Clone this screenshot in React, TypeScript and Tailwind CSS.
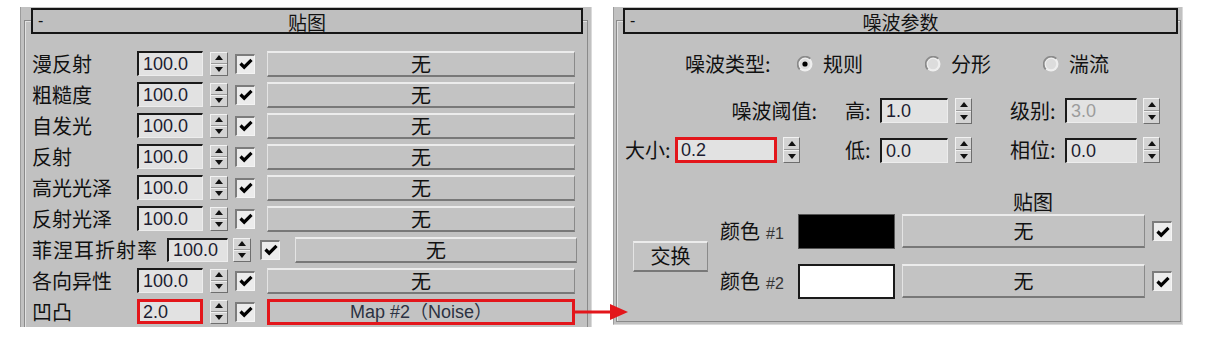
import React from "react";

const CJK = "font-['Noto_Sans_CJK_SC','Noto_Sans',sans-serif]";
const LAT = "font-['Liberation_Sans','Noto_Sans_CJK_SC',sans-serif]";

function Spinner({ className = "w-[18px] h-[24px]" }: { className?: string }) {
  return (
    <div
      className={`${className} flex flex-col bg-[#d3d3d3] border-t border-l border-b border-r border-t-[#f2f2f2] border-l-[#f2f2f2] border-b-[#6e6e6e] border-r-[#6e6e6e]`}
    >
      <div className="flex-1 flex items-center justify-center border-b border-b-[#9a9a9a]">
        <svg width="8" height="5" viewBox="0 0 8 5">
          <path d="M4 0 L8 5 L0 5Z" fill="#111" />
        </svg>
      </div>
      <div className="flex-1 flex items-center justify-center border-t border-t-[#f0f0f0]">
        <svg width="8" height="5" viewBox="0 0 8 5">
          <path d="M0 0 L8 0 L4 5Z" fill="#111" />
        </svg>
      </div>
    </div>
  );
}

function Check() {
  return (
    <div className="w-[20px] h-[20px] shrink-0 bg-[#ececec] border-t-2 border-l-2 border-b border-r border-t-[#7c7c7c] border-l-[#7c7c7c] border-b-[#f4f4f4] border-r-[#f4f4f4] flex items-center justify-center">
      <svg width="14" height="12" viewBox="0 0 14 12">
        <path d="M1.5 5.5 L5.2 9.2 L12.5 1.8" stroke="#000" strokeWidth="3.2" fill="none" />
      </svg>
    </div>
  );
}

function Field({
  value,
  className,
  red = false,
  dim = false,
}: {
  value: string;
  className: string;
  red?: boolean;
  dim?: boolean;
}) {
  const border = red
    ? "border-[3px] border-[#e3161b] pl-[3px]"
    : "border-t-2 border-l-2 border-b border-r border-t-[#1a1a1a] border-l-[#1a1a1a] border-b-[#ededed] border-r-[#ededed] pl-[4px]";
  return (
    <div
      className={`${className} ${border} shrink-0 bg-[#e2e2e2] flex items-center overflow-hidden ${LAT} text-[18px] leading-none ${
        dim ? "text-[#9c9c9c]" : "text-[#1c1c30]"
      }`}
    >
      {value}
    </div>
  );
}

function Btn({
  children,
  className,
  red = false,
}: {
  children: React.ReactNode;
  className: string;
  red?: boolean;
}) {
  const border = red
    ? "border-[3px] border-[#e3161b]"
    : "border-t-2 border-l border-b-2 border-r border-t-[#ececec] border-l-[#e4e4e4] border-b-[#787878] border-r-[#8a8a8a]";
  return (
    <div
      className={`${className} ${border} shrink-0 bg-[#c3c3c3] flex items-center justify-center text-[20px] leading-none text-[#111]`}
    >
      {children}
    </div>
  );
}

function TitleBar({ title, className }: { title: string; className: string }) {
  return (
    <div
      className={`${className} h-[26px] border-2 border-[#161616] bg-[#bfbfbf] flex items-center text-[#111]`}
    >
      <span className={`w-[24px] pl-[5px] ${LAT} text-[16px] leading-none`}>-</span>
      <span className="flex-1 text-center text-[19px] leading-none">{title}</span>
      <span className="w-[24px]" />
    </div>
  );
}

function Radio({ on = false }: { on?: boolean }) {
  return (
    <svg width="16" height="16" viewBox="0 0 16 16" className="shrink-0">
      <circle cx="8" cy="8" r="7.5" fill="#eeeeee" />
      <path d="M2.7 13.3 A7.5 7.5 0 0 1 13.3 2.7" stroke="#8a8a8a" strokeWidth="1.8" fill="none" />
      <circle cx="8" cy="8" r="5.2" fill="#dcdcdc" />
      {on && <circle cx="8" cy="8" r="2.6" fill="#000" />}
    </svg>
  );
}

const leftRows: [string, string][] = [
  ["漫反射", "100.0"],
  ["粗糙度", "100.0"],
  ["自发光", "100.0"],
  ["反射", "100.0"],
  ["高光光泽", "100.0"],
  ["反射光泽", "100.0"],
  ["菲涅耳折射率", "100.0"],
  ["各向异性", "100.0"],
  ["凹凸", "2.0"],
];

function LeftPanel() {
  return (
    <div className="w-[572px] h-[320px] shrink-0 overflow-hidden bg-[#c1c1c1] border-l border-r border-l-[#9c9c9c] border-r-[#dadada] pt-[13px] px-[3px]">
      <div className="h-[400px] border border-[#8a8a8a] shadow-[inset_1px_1px_0_#e2e2e2]">
        <TitleBar title="贴图" className="-mt-[13px] ml-[6px] mr-[4px]" />
        <div className="mt-[14px] flex flex-col">
          {leftRows.map(([label, val], i) => {
            if (i === 6) {
              return (
                <div key={i} className="h-[31px] flex items-center pl-[7px]">
                  <span className="w-[133px] shrink-0 text-[20px] leading-none whitespace-nowrap text-[#111] tracking-[1px]">
                    {label}
                  </span>
                  <Field value={val} className="w-[61px] h-[24px] ml-[2px]" />
                  <Spinner className="w-[18px] h-[24px] ml-[5px]" />
                  <div className="ml-[9px]">
                    <Check />
                  </div>
                  <Btn className="w-[282px] h-[26px] ml-[15px]">无</Btn>
                </div>
              );
            }
            const last = i === 8;
            return (
              <div key={i} className="h-[31px] flex items-center pl-[7px]">
                <span className="w-[105px] shrink-0 text-[20px] leading-none whitespace-nowrap text-[#111]">
                  {label}
                </span>
                <Field value={val} red={last} className="w-[66px] h-[25px]" />
                <Spinner className="w-[18px] h-[24px] ml-[7px]" />
                <div className="ml-[7px]">
                  <Check />
                </div>
                {last ? (
                  <Btn red className={`w-[308px] h-[26px] ml-[12px] ${LAT} !text-[18px] !text-[#2c3242]`}>
                    Map #2（Noise）
                  </Btn>
                ) : (
                  <Btn className="w-[308px] h-[26px] ml-[12px]">无</Btn>
                )}
              </div>
            );
          })}
        </div>
      </div>
    </div>
  );
}

function RightPanel() {
  return (
    <div className="w-[570px] h-[318px] shrink-0 bg-[#c1c1c1] border-l border-r border-b border-l-[#9c9c9c] border-r-[#dadada] border-b-[#dadada] pt-[13px] pl-[2px] pr-[1px] pb-[2px]">
      <div className="h-full border border-[#8a8a8a] shadow-[inset_1px_1px_0_#e2e2e2] flex flex-col text-[#111]">
        <TitleBar title="噪波参数" className="-mt-[13px] ml-[6px] mr-[2px]" />

        {/* Row A: noise type */}
        <div className="mt-[15px] h-[30px] flex items-center pl-[68px] text-[20px] leading-none whitespace-nowrap">
          <span className="w-[92px] shrink-0">噪波类型:</span>
          <div className="ml-[20px] w-[128px] flex items-center">
            <Radio on />
            <span className="ml-[10px]">规则</span>
          </div>
          <div className="w-[118px] flex items-center">
            <Radio />
            <span className="ml-[10px]">分形</span>
          </div>
          <div className="flex items-center">
            <Radio />
            <span className="ml-[10px]">湍流</span>
          </div>
        </div>

        {/* Row B */}
        <div className="mt-[18px] h-[27px] flex items-center pl-[8px] text-[20px] leading-none whitespace-nowrap">
          <span className="w-[192px] shrink-0 text-right">噪波阈值:</span>
          <span className="ml-[28px] w-[35px] shrink-0">高:</span>
          <Field value="1.0" className="w-[68px] h-[25px]" />
          <Spinner className="w-[17px] h-[26px] ml-[7px]" />
          <span className="ml-[38px] w-[55px] shrink-0">级别:</span>
          <Field value="3.0" dim className="w-[72px] h-[25px]" />
          <Spinner className="w-[17px] h-[26px] ml-[6px]" />
        </div>

        {/* Row C */}
        <div className="mt-[12px] h-[28px] flex items-center pl-[8px] text-[20px] leading-none whitespace-nowrap">
          <span className="w-[50px] shrink-0">大小:</span>
          <Field value="0.2" red className="w-[102px] h-[26px]" />
          <Spinner className="w-[17px] h-[26px] ml-[6px]" />
          <span className="ml-[45px] w-[35px] shrink-0">低:</span>
          <Field value="0.0" className="w-[68px] h-[25px]" />
          <Spinner className="w-[17px] h-[26px] ml-[7px]" />
          <span className="ml-[38px] w-[55px] shrink-0">相位:</span>
          <Field value="0.0" className="w-[72px] h-[25px]" />
          <Spinner className="w-[17px] h-[26px] ml-[6px]" />
        </div>

        {/* Map label */}
        <div className="mt-[27px] h-[22px] flex items-center pl-[396px] text-[20px] leading-none">
          贴图
        </div>

        {/* Colors */}
        <div className="flex items-center pl-[16px]">
          <Btn className="w-[75px] h-[31px]">交换</Btn>
          <div className="ml-[12px] flex flex-col gap-[14px]">
            <div className="h-[36px] flex items-center">
              <span className="w-[78px] shrink-0 flex items-baseline text-[20px] leading-none whitespace-nowrap">
                颜色<span className={`ml-[6px] ${LAT} text-[16px] text-[#333]`}>#1</span>
              </span>
              <div className="w-[97px] h-[35px] bg-black border border-[#555]" />
              <Btn className="w-[243px] h-[34px] ml-[7px]">无</Btn>
              <div className="ml-[7px]">
                <Check />
              </div>
            </div>
            <div className="h-[36px] flex items-center">
              <span className="w-[78px] shrink-0 flex items-baseline text-[20px] leading-none whitespace-nowrap">
                颜色<span className={`ml-[6px] ${LAT} text-[16px] text-[#333]`}>#2</span>
              </span>
              <div className="w-[97px] h-[35px] bg-white border-2 border-[#1a1a1a]" />
              <Btn className="w-[243px] h-[34px] ml-[7px]">无</Btn>
              <div className="ml-[7px]">
                <Check />
              </div>
            </div>
          </div>
        </div>
      </div>
    </div>
  );
}

export default function App() {
  return (
    <div className={`relative w-[1215px] h-[339px] bg-white overflow-hidden ${CJK}`}>
      <div className="flex items-start pl-[20px] pt-[7px] gap-[21px]">
        <LeftPanel />
        <RightPanel />
      </div>
      <svg
        className="absolute left-[575px] top-[303px]"
        width="54"
        height="18"
        viewBox="0 0 54 18"
      >
        <path d="M0 9 H38" stroke="#e3161b" strokeWidth="3" />
        <path d="M35 1 L53 9 L35 17 Z" fill="#e3161b" />
      </svg>
    </div>
  );
}
